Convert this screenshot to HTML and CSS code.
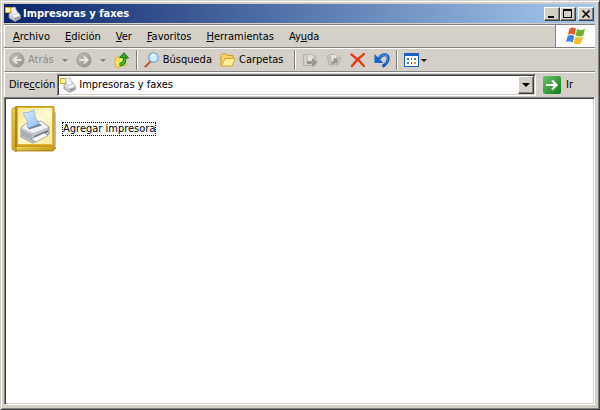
FILE: index.html
```
<!DOCTYPE html>
<html lang="es">
<head>
  <meta charset="UTF-8" />
  <meta name="viewport" content="width=device-width, initial-scale=1.0"/>
  <title>Impresoras y faxes</title>
  <link rel="stylesheet" href="styles.css">
</head>
<body>
  <!-- shared gradients and the small printer icon -->
  <svg class="defs" width="0" height="0" aria-hidden="true">
    <defs>
      <linearGradient id="gold" x1="0" y1="0" x2="1" y2="1">
        <stop offset="0" stop-color="#f6dc62"/>
        <stop offset="1" stop-color="#b98a08"/>
      </linearGradient>
      <linearGradient id="page" x1="0" y1="0" x2="1" y2="1">
        <stop offset="0" stop-color="#fbe88c"/>
        <stop offset=".5" stop-color="#fffad2"/>
        <stop offset="1" stop-color="#f8e99a"/>
      </linearGradient>
      <linearGradient id="paper" x1="0" y1="0" x2="1" y2="1">
        <stop offset="0" stop-color="#dceeff"/>
        <stop offset="1" stop-color="#8fbff2"/>
      </linearGradient>
      <linearGradient id="go" x1="0" y1="0" x2="1" y2="1">
        <stop offset="0" stop-color="#6cc26c"/>
        <stop offset="1" stop-color="#0f7d1c"/>
      </linearGradient>
      <linearGradient id="ball" x1="0" y1="0" x2="1" y2="1">
        <stop offset="0" stop-color="#c4c1bb"/>
        <stop offset="1" stop-color="#94918b"/>
      </linearGradient>
      <symbol id="printer" viewBox="0 0 16 16">
        <path d="M4 8l2.500-2 6-.5 3 4v3L10 15.500 4 12z" fill="#c9cad0" stroke="#8a8c95" stroke-width=".7"/>
        <path d="M4.500 8.300l5 3 5.500-2-2.700-3.300-5 .7z" fill="#f5f5f7"/>
        <path d="M5 2l5-1 2.500 6-5 2z" fill="#f1f4fd" stroke="#a9b3cc" stroke-width=".7"/>
        <path d="M9.500 12.500l5-2v1.500l-4.500 2.300z" fill="#8d9099"/>
        <path d="M.5 1.500h5v5h-5z" fill="#fff6b8" stroke="#e5ac1c"/>
      </symbol>
    </defs>
  </svg>

  <div class="window">
    <header class="titlebar">
      <svg class="icon" width="16" height="16"><use href="#printer"/></svg>
      <h1 class="title">Impresoras y faxes</h1>
      <div class="controls">
        <button class="control" type="button" aria-label="Minimizar">
          <svg width="12" height="10" shape-rendering="crispEdges"><path d="M2 7h6v2H2z"/></svg>
        </button>
        <button class="control" type="button" aria-label="Maximizar">
          <svg width="12" height="10" shape-rendering="crispEdges"><path d="M1 0h9v9H1zM2 2v6h7V2z" fill-rule="evenodd"/></svg>
        </button>
        <button class="control close" type="button" aria-label="Cerrar">
          <svg width="12" height="10"><path d="M2.500 1.500l7 7M9.500 1.500l-7 7" stroke="#000" stroke-width="1.600"/></svg>
        </button>
      </div>
    </header>

    <div class="menubar">
      <nav class="menu">
        <button type="button"><u>A</u>rchivo</button>
        <button type="button"><u>E</u>dición</button>
        <button type="button"><u>V</u>er</button>
        <button type="button"><u>F</u>avoritos</button>
        <button type="button"><u>H</u>erramientas</button>
        <button type="button">Ay<u>u</u>da</button>
      </nav>
      <div class="brand">
        <svg width="20" height="20" viewBox="0 0 20 20">
          <path d="M3.500 2.500Q7 .5 10 2.500L8.500 9Q5.500 7 2 8.800z" fill="#ea5b2c"/>
          <path d="M11 3Q14.500 5 19 3L17.200 9.500Q13.500 11.500 9.600 9.500z" fill="#6db52d"/>
          <path d="M1.700 9.800Q5 8 8.200 10L6.700 16.500Q3.500 14.500 0 16z" fill="#3f7fe0"/>
          <path d="M9.300 10.500Q13 12.500 17 10.500L15 17.300Q11.500 19.300 7.700 17z" fill="#f8bd26"/>
        </svg>
      </div>
    </div>

    <div class="toolbar">
      <button class="tool" type="button" disabled>
        <svg width="16" height="16"><circle cx="8" cy="8" r="7" fill="url(#ball)" stroke="#9b9892"/><path d="M12.500 8H5M8 4.500L4.500 8 8 11.500" fill="none" stroke="#e9e6e0" stroke-width="2"/></svg>
        Atrás
      </button>
      <button class="drop" type="button" disabled aria-label="Historial anterior"></button>
      <button class="tool" type="button" disabled aria-label="Adelante">
        <svg width="16" height="16"><circle cx="8" cy="8" r="7" fill="url(#ball)" stroke="#9b9892"/><path d="M3.500 8h7.500M8 4.500l3.500 3.500L8 11.500" fill="none" stroke="#e9e6e0" stroke-width="2"/></svg>
      </button>
      <button class="drop" type="button" disabled aria-label="Historial siguiente"></button>
      <button class="tool last" type="button" aria-label="Arriba">
        <svg width="16" height="16"><path d="M1 7l3-2.500 2 1 5-.5 1 8-8 2.500-2.500-1z" fill="#fbe763" stroke="#d8b02c"/><path d="M5.500 12.500c5-.5 5.500-3.500 5-7" fill="none" stroke="#187a18" stroke-width="3.500"/><path d="M5.500 12.500c5-.5 5.500-3.500 5-7" fill="none" stroke="#4cc03c" stroke-width="1.600"/><path d="M5.500 5.500L10 .8l4.500 5.200z" fill="#35a82c" stroke="#187a18"/></svg>
      </button>
      <span class="separator"></span>
      <button class="tool" type="button">
        <svg width="16" height="16"><path d="M6 10l-4.500 4.500" stroke="#b8643c" stroke-width="2.400" stroke-linecap="round"/><circle cx="9.500" cy="5.500" r="4.700" fill="#c9ebfb" stroke="#7ba3cc" stroke-width="1.300"/><path d="M7 5a3 3 0 013-2.500" fill="none" stroke="#fff" stroke-width="1.500"/></svg>
        Búsqueda
      </button>
      <button class="tool folders" type="button">
        <svg width="16" height="16"><path d="M1 13.500V3.500l1.500-1.500h3.500l1.500 1.500h5.500v3" fill="#f6d568" stroke="#cf9a1e"/><path d="M1.500 14L5 6.500h10.300L12 14z" fill="#fff0a0" stroke="#d9a52c"/></svg>
        Carpetas
      </button>
      <span class="separator"></span>
      <button class="tool" type="button" disabled aria-label="Mover a">
        <svg width="16" height="16"><path d="M1.500 13.500v-11h3l1 1.500h8v9.500z" fill="#d4d1ca" stroke="#b4b1aa"/><path d="M5 2.500h5l2 2V10H5z" fill="#e6e3dd" stroke="#b4b1aa"/><path d="M5 9h5V6l5.500 4.500L10 15v-3H5z" fill="#9a9792"/></svg>
      </button>
      <button class="tool" type="button" disabled aria-label="Copiar a">
        <svg width="16" height="16"><path d="M1.500 4h3l1 1.500h9.500L12 13H3z" fill="#cbc8c1" stroke="#b4b1aa"/><path d="M4 2.500h5l2 2V10H5z" fill="#e6e3dd" stroke="#b4b1aa"/><path d="M5 11l3-3-1-2 5 1-1 5-1.500-1.500L7 13z" fill="#9a9792"/></svg>
      </button>
      <button class="tool" type="button" aria-label="Eliminar">
        <svg width="16" height="16"><path d="M1.500 2.500Q8 7 14 14M14 2Q7 7 2 14" fill="none" stroke="#e03a17" stroke-width="2.200" stroke-linecap="round"/></svg>
      </button>
      <button class="tool last" type="button" aria-label="Deshacer">
        <svg width="16" height="16"><path d="M5 7c2-5 9-6 9.200-1 0 3.500-2 6-5.700 8.500" fill="none" stroke="#1558b5" stroke-width="3"/><path d="M5.500 6c2-4 8-4.500 8.500 0 0 2-1 4-3 6" fill="none" stroke="#3f8ae6" stroke-width="1.200"/><path d="M.5 2v9h9z" fill="#1a63c4"/></svg>
      </button>
      <span class="separator"></span>
      <button class="tool views" type="button" aria-label="Vistas">
        <svg width="16" height="16" shape-rendering="crispEdges"><path d="M0 1h15v14H0z" fill="#1c62c4"/><path d="M1 4h13v10H1z" fill="#fff"/><path d="M3 6h2v2H3zM7 6h1v2H7zM3 10h2v2H3z" fill="#4878b8"/><path d="M10 6h2v2h-2z" fill="#3a9850"/><path d="M7 10h1v2H7z" fill="#b03820"/><path d="M10 10h2v2h-2z" fill="#d8a028"/></svg>
        <span class="arrow"></span>
      </button>
    </div>

    <form class="addressbar">
      <label for="address">Dire<u>c</u>ción</label>
      <div class="combo">
        <svg class="icon" width="16" height="16"><use href="#printer"/></svg>
        <input id="address" type="text" value="Impresoras y faxes">
        <button class="combo-button" type="button" aria-label="Mostrar direcciones"><span class="arrow"></span></button>
      </div>
      <button class="go" type="button">
        <svg width="18" height="18"><rect width="18" height="18" rx="2" fill="url(#go)"/><path d="M3 9h10M9 4.500L13.500 9 9 13.500" fill="none" stroke="#fff" stroke-width="2.200"/></svg>
        Ir
      </button>
    </form>

    <main class="content">
      <a class="item" href="#">
        <svg width="48" height="48" viewBox="0 0 48 48">
          <path d="M8 46h34l3-5V8l-2-2v37z" fill="#77736a" opacity=".45"/>
          <path d="M1 4l3-2h3v40l-2 5-4-3z" fill="url(#gold)" stroke="#b8890f" stroke-width=".8"/>
          <path d="M5 41h36l4 2-3 3H5z" fill="url(#gold)" stroke="#a87c0c" stroke-width=".8"/>
          <path d="M5 1.500h38V41H5z" fill="#e0b52c" stroke="#b8890f" stroke-width=".8"/>
          <path d="M7 3h34v36H7z" fill="url(#page)"/>
          <path d="M5 2v40" stroke="#8e6a08"/>
          <path d="M10 23l4-4 16-3 8 6v7L22 38l-12-6z" fill="#c3c6cd" stroke="#858993" stroke-width=".8"/>
          <path d="M10.500 23l4-4 15.500-2.500 7.500 5.500-15.500 6z" fill="#f1f2f5"/>
          <path d="M16 21l12-3 3 2.500-13 4z" fill="#7c818c"/>
          <path d="M12 8q6 0 11-3 0 7 5 14l-11 4q0-8-5-15z" fill="url(#paper)" stroke="#7fa8d8" stroke-width=".7"/>
          <path d="M10.500 25l11 5v5.500l-11-5z" fill="#a9adb6"/>
          <path d="M23 31l14-6v2l-14 6.500z" fill="#6b707a"/>
          <path d="M20 34l13-6 4 2.500L25 37z" fill="#fafafc" stroke="#8a8e97" stroke-width=".7"/>
        </svg>
        <span class="item-label">Agregar impresora</span>
      </a>
    </main>
  </div>
</body>
</html>
```
FILE: styles.css
```
* {
  margin: 0;
  padding: 0;
  box-sizing: border-box;
}

body {
  font-family: Tahoma, "DejaVu Sans Condensed", "DejaVu Sans", sans-serif;
  font-size: 11px;
  line-height: 14px;
  color: #000;
  background: #d4d0c8;
}

button,
input {
  font: inherit;
  color: inherit;
  border: 0;
  background: none;
}

svg {
  display: block;
  flex: none;
}

.defs {
  position: absolute;
}

.window {
  display: flex;
  flex-direction: column;
  min-height: 100vh;
  padding: 2px 3px 3px 2px;
  border: 1px solid;
  border-color: #d4d0c8 #404040 #404040 #d4d0c8;
  box-shadow: inset 1px 1px #fff, inset -1px -1px #808080;
}

.titlebar {
  display: flex;
  align-items: center;
  gap: 2px;
  height: 19px;
  margin: 1px 1px 0;
  padding: 0 1px;
  background: linear-gradient(to right, #0a246a, #a6caf0);
}

.title {
  flex: 1;
  font-size: 11px;
  font-weight: bold;
  color: #fff;
}

.controls {
  display: flex;
}

.control {
  width: 16px;
  height: 14px;
  padding: 1px;
  background: #d4d0c8;
  border: 1px solid;
  border-color: #fff #404040 #404040 #fff;
  box-shadow: inset -1px -1px #808080;
}

.close {
  margin-left: 2px;
}

.menubar {
  display: flex;
  align-items: stretch;
  height: 24px;
  margin: 1px 1px 0;
  border-top: 1px solid #808080;
  border-bottom: 1px solid #808080;
  box-shadow: inset 1px 1px #fff;
}

.menu {
  display: flex;
  flex: 1;
  align-items: center;
  gap: 1px;
  padding: 1px 0 0 2px;
}

.menu button {
  padding: 0 7px;
}

.brand {
  display: flex;
  align-items: center;
  justify-content: center;
  width: 40px;
  background: #fff;
  border-left: 1px solid #808080;
}

.toolbar {
  display: flex;
  align-items: center;
  height: 24px;
  margin: 0 1px;
  padding-left: 4px;
  border-top: 1px solid #fff;
  border-left: 1px solid #fff;
  border-bottom: 1px solid #808080;
}

.tool {
  display: flex;
  align-items: center;
  gap: 3px;
  margin-right: 8px;
}

.tool:disabled {
  color: #8c8984;
}

.drop {
  width: 6px;
  margin-right: 8px;
  border: 3px solid transparent;
  border-top-color: #808080;
  border-bottom: 0;
}

.last {
  margin-right: 6px;
}

.folders {
  margin-right: 11px;
}

.separator {
  width: 2px;
  height: 20px;
  margin-right: 6px;
  border-left: 1px solid #808080;
  border-right: 1px solid #fff;
}

.arrow {
  border: 3px solid transparent;
  border-top-color: #000;
  border-bottom: 0;
}

.views {
  gap: 1px;
}

.addressbar {
  display: flex;
  align-items: center;
  height: 25px;
  margin: 0 1px;
  padding-left: 4px;
  border-top: 1px solid #fff;
  border-left: 1px solid #fff;
}

.combo {
  display: flex;
  flex: 1;
  align-items: center;
  height: 22px;
  margin-left: 2px;
  padding: 1px;
  background: #fff;
  border: 1px solid;
  border-color: #808080 #fff #fff #808080;
  box-shadow: inset 1px 1px #404040, inset -1px -1px #d4d0c8;
}

.combo .icon {
  margin-left: 1px;
}

.combo input {
  flex: 1;
  min-width: 0;
  margin-left: 3px;
  outline: none;
}

.combo-button {
  display: flex;
  align-items: center;
  justify-content: center;
  width: 16px;
  height: 18px;
  background: #d4d0c8;
  border: 1px solid;
  border-color: #fff #404040 #404040 #fff;
  box-shadow: inset -1px -1px #808080;
}

.combo-button .arrow {
  border-width: 4px 4px 0;
}

.go {
  display: flex;
  align-items: center;
  gap: 5px;
  width: 52px;
  margin-left: 7px;
}

.content {
  flex: 1;
  margin: 0 1px 1px;
  padding: 7px 6px;
  background: #fff;
  border: 1px solid;
  border-color: #808080 #fff #fff #808080;
  box-shadow: inset 1px 1px #404040, inset -1px -1px #d4d0c8;
}

.item {
  display: inline-flex;
  align-items: center;
  gap: 3px;
  color: #000;
  text-decoration: none;
}

.item-label {
  border: 1px dotted #000;
  line-height: 12px;
}
```
